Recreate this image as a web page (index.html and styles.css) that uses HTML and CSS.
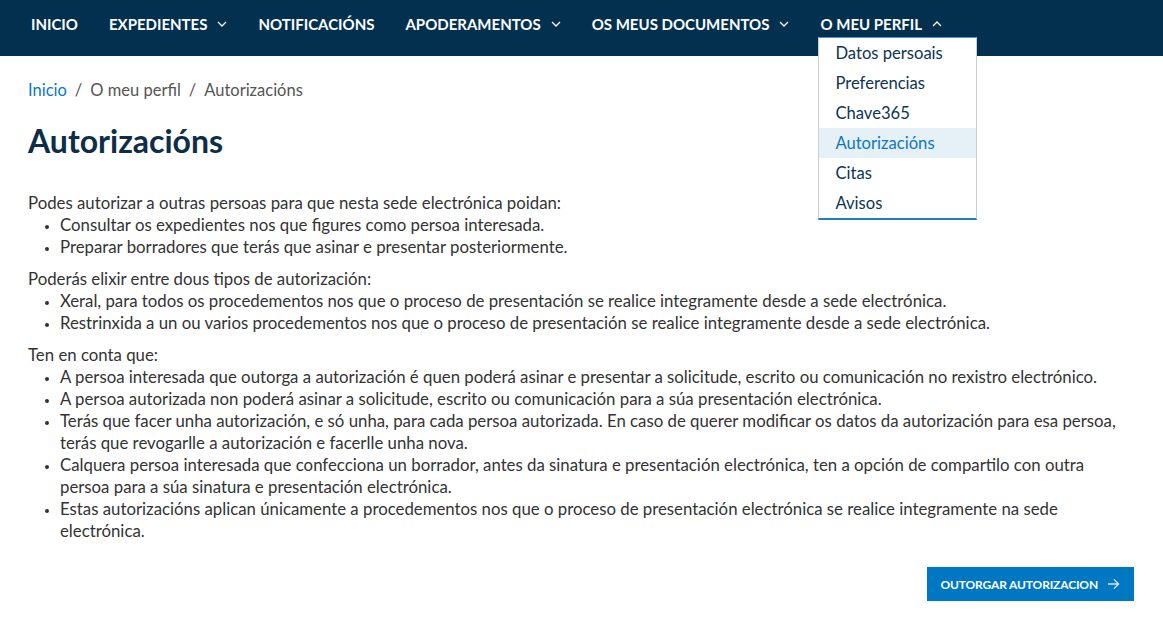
FILE: index.html
```html
<!DOCTYPE html>
<html lang="gl">
<head>
<meta charset="utf-8">
<title>Autorizacións</title>
<link rel="stylesheet" href="styles.css">
</head>
<body>
<header class="topbar">
  <nav>
    <ul class="menu">
      <li class="menu-item"><a href="#">INICIO</a></li>
      <li class="menu-item"><a href="#">EXPEDIENTES <svg class="chev" viewBox="0 0 10 6"><path d="M1 1l4 4 4-4"/></svg></a></li>
      <li class="menu-item"><a href="#">NOTIFICACIÓNS</a></li>
      <li class="menu-item"><a href="#">APODERAMENTOS <svg class="chev" viewBox="0 0 10 6"><path d="M1 1l4 4 4-4"/></svg></a></li>
      <li class="menu-item"><a href="#">OS MEUS DOCUMENTOS <svg class="chev" viewBox="0 0 10 6"><path d="M1 1l4 4 4-4"/></svg></a></li>
      <li class="menu-item open"><a href="#">O MEU PERFIL <svg class="chev" viewBox="0 0 10 6"><path d="M1 5l4-4 4 4"/></svg></a>
        <ul class="dropdown">
          <li><a href="#">Datos persoais</a></li>
          <li><a href="#">Preferencias</a></li>
          <li><a href="#">Chave365</a></li>
          <li class="active"><a href="#">Autorizacións</a></li>
          <li><a href="#">Citas</a></li>
          <li><a href="#">Avisos</a></li>
        </ul>
      </li>
    </ul>
  </nav>
</header>
<main class="content">
  <div class="breadcrumb"><a href="#">Inicio</a><span class="sep">/</span><span>O meu perfil</span><span class="sep">/</span><span>Autorizacións</span></div>
  <h1 class="title">Autorizacións</h1>
  <div class="text">
    <p>Podes autorizar a outras persoas para que nesta sede electrónica poidan:</p>
    <ul>
      <li>Consultar os expedientes nos que figures como persoa interesada.</li>
      <li>Preparar borradores que terás que asinar e presentar posteriormente.</li>
    </ul>
    <p>Poderás elixir entre dous tipos de autorización:</p>
    <ul>
      <li>Xeral, para todos os procedementos nos que o proceso de presentación se realice integramente desde a sede electrónica.</li>
      <li>Restrinxida a un ou varios procedementos nos que o proceso de presentación se realice integramente desde a sede electrónica.</li>
    </ul>
    <p>Ten en conta que:</p>
    <ul>
      <li>A persoa interesada que outorga a autorización é quen poderá asinar e presentar a solicitude, escrito ou comunicación no rexistro electrónico.</li>
      <li>A persoa autorizada non poderá asinar a solicitude, escrito ou comunicación para a súa presentación electrónica.</li>
      <li>Terás que facer unha autorización, e só unha, para cada persoa autorizada. En caso de querer modificar os datos da autorización para esa persoa, terás que revogarlle a autorización e facerlle unha nova.</li>
      <li>Calquera persoa interesada que confecciona un borrador, antes da sinatura e presentación electrónica, ten a opción de compartilo con outra persoa para a súa sinatura e presentación electrónica.</li>
      <li>Estas autorizacións aplican únicamente a procedementos nos que o proceso de presentación electrónica se realice integramente na sede electrónica.</li>
    </ul>
  </div>
  <div class="actions">
    <a href="#" class="btn">OUTORGAR AUTORIZACION <svg class="arrow" viewBox="0 0 14 12"><path d="M1 6h12M7.5 1l5 5-5 5"/></svg></a>
  </div>
</main>
</body>
</html>
```
FILE: styles.css
```css
* { box-sizing: border-box; }
html, body { margin: 0; padding: 0; }
body {
  font-family: Lato, "Noto Sans", sans-serif;
  color: #333;
  background: #fff;
  font-size: 16.8px;
}
a { text-decoration: none; color: inherit; }

.topbar {
  background: #03304f;
  height: 56px;
}
.menu {
  list-style: none;
  margin: 0;
  padding: 14px 0 0 31px;
  display: flex;
  gap: 31px;
  height: 56px;
  align-items: flex-start;
}
.menu-item { position: relative; }
.menu-item > a {
  color: #fff;
  font-weight: 700;
  font-size: 15px;
  display: flex;
  align-items: center;
  gap: 10px;
  line-height: 20px;
  height: 20px;
}
.chev {
  width: 10px;
  height: 6px;
  fill: none;
  stroke: #fff;
  stroke-width: 1.3;
}
.dropdown {
  position: absolute;
  top: 23px;
  left: -2px;
  width: 159px;
  list-style: none;
  margin: 0;
  padding: 0;
  background: #fff;
  border: 1px solid #c8ced3;
  border-top: 1px solid #4a90c8;
  border-bottom: 2px solid #1a7fc4;
  z-index: 10;
}
.dropdown li a {
  display: block;
  height: 30px;
  line-height: 30px;
  padding-left: 16px;
  color: #0d3553;
  font-size: 16.6px;
}
.dropdown li.active a {
  background: #e6f0f7;
  color: #0a78c2;
}

.content {
  padding: 0 28px;
}
.breadcrumb {
  padding-top: 24px;
  font-size: 16.5px;
  line-height: 20px;
  color: #555;
}
.breadcrumb a { color: #0a78c2; }
.breadcrumb .sep { margin: 0 8px; }
.title {
  margin: 21px 0 0;
  font-size: 32px;
  line-height: 40px;
  font-weight: 700;
  color: #0d2d48;
}
.text {
  margin-top: 31px;
  line-height: 22px;
}
.text p { margin: 0; }
.text ul {
  margin: 0 0 10px;
  padding-left: 32px;
}
.text li::marker { font-size: 12px; }
.actions {
  display: flex;
  justify-content: flex-end;
  margin-top: 25px;
  padding-right: 1px;
}
.btn {
  display: flex;
  align-items: center;
  gap: 9px;
  background: #0077c2;
  color: #fff;
  font-weight: 700;
  font-size: 12px;
  letter-spacing: -0.15px;
  height: 34px;
  padding: 0 14px 0 13px;
}
.arrow {
  width: 13px;
  height: 12px;
  fill: none;
  stroke: #d6e8f5;
  stroke-width: 1.4;
}
```
